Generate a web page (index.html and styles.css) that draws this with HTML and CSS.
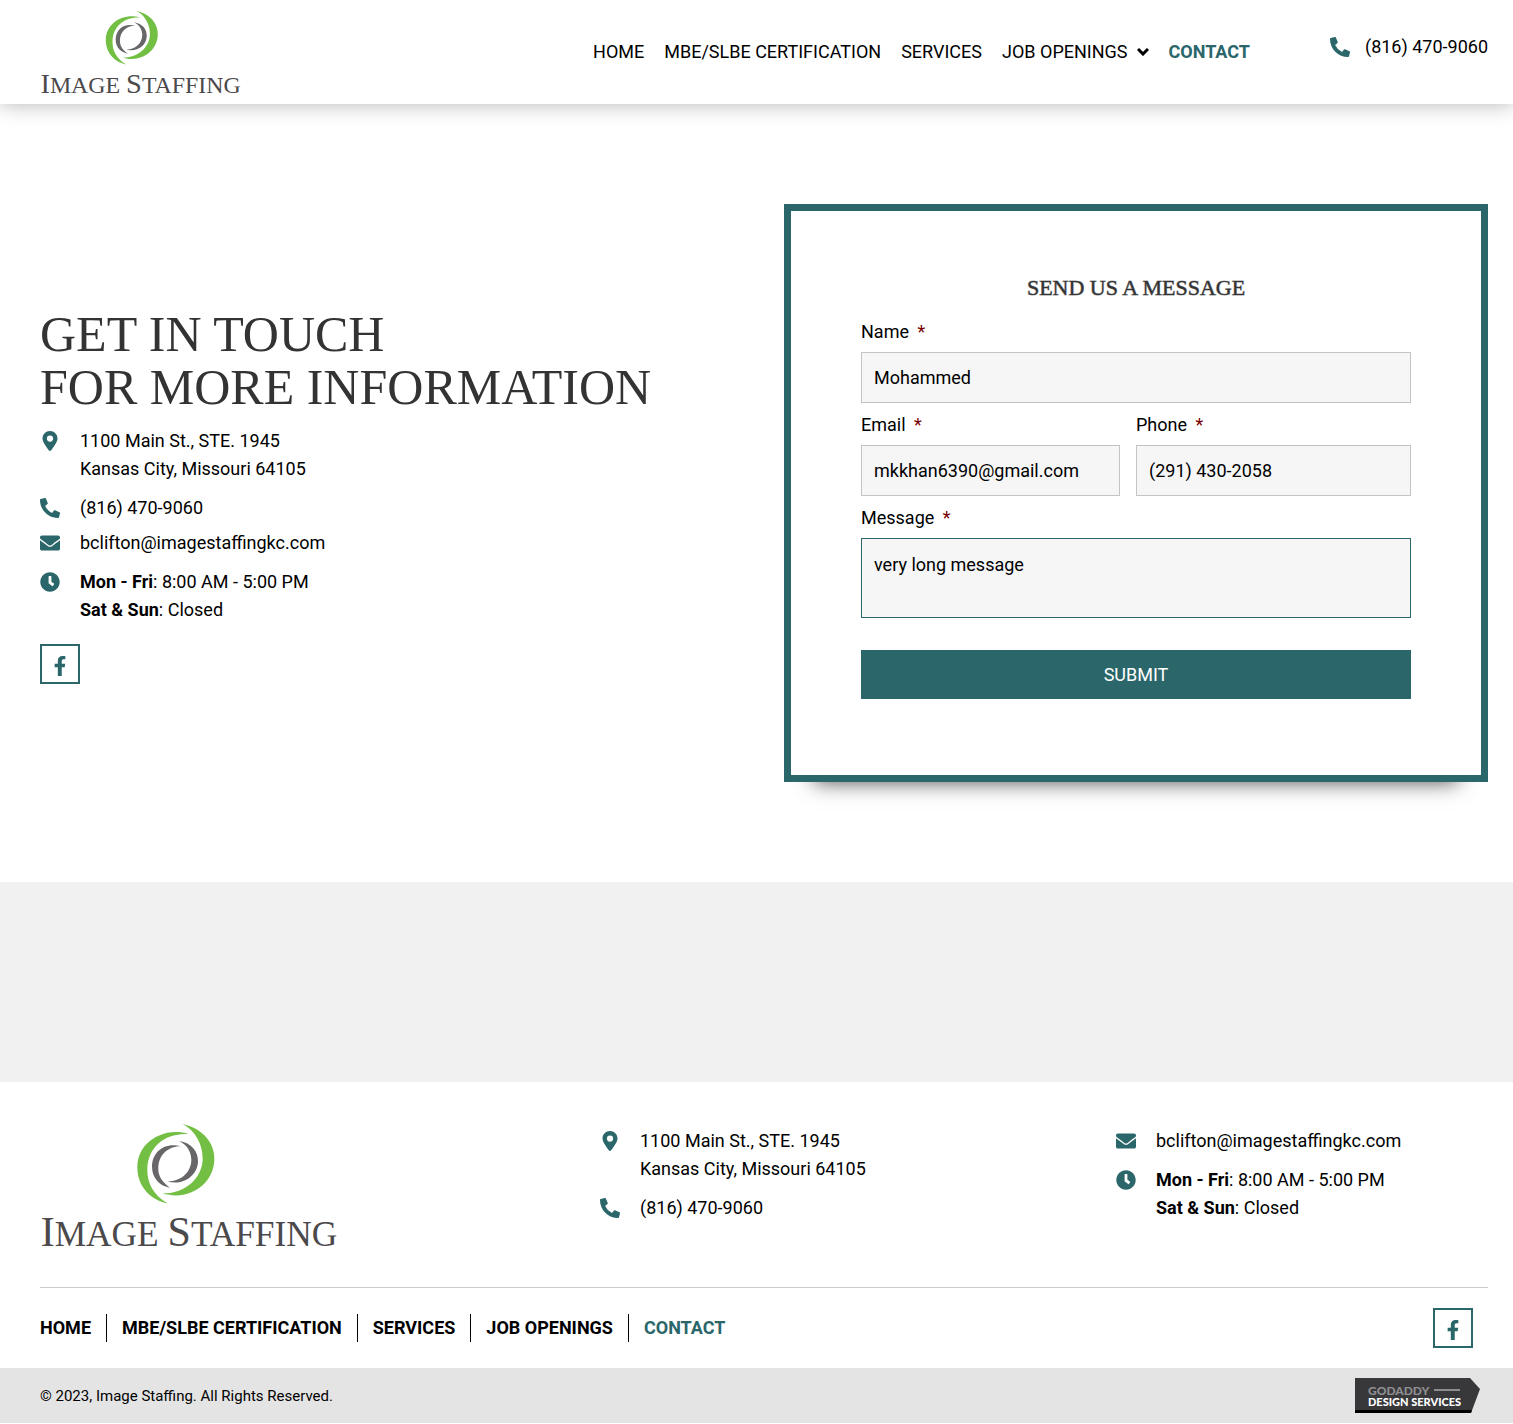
FILE: index.html
```html
<!DOCTYPE html>
<html lang="en">
<head>
<meta charset="utf-8">
<meta name="viewport" content="width=device-width, initial-scale=1">
<title>Contact | Image Staffing</title>
<link rel="stylesheet" href="styles.css">
</head>
<body>
<svg class="sprite" width="0" height="0" aria-hidden="true">
  <symbol id="pin" viewBox="0 0 384 512"><path d="M215.7 499.2C267 435 384 279.4 384 192C384 86 298 0 192 0S0 86 0 192c0 87.4 117 243 168.3 307.2c12.3 15.3 35.1 15.3 47.4 0zM192 112a80 80 0 1 1 0 160 80 80 0 1 1 0-160z"/></symbol>
  <symbol id="phone" viewBox="0 0 512 512"><path d="M497.39 361.8l-112-48a24 24 0 0 0-28 6.9l-49.6 60.6A370.66 370.66 0 0 1 130.6 204.11l60.6-49.6a23.94 23.94 0 0 0 6.9-28l-48-112A24.16 24.16 0 0 0 122.6.61l-104 24A24 24 0 0 0 0 48c0 256.5 207.9 464 464 464a24 24 0 0 0 23.4-18.6l24-104a24.29 24.29 0 0 0-14.01-27.6z"/></symbol>
  <symbol id="mail" viewBox="0 0 512 512"><path d="M502.3 190.8c3.9-3.1 9.7-.2 9.7 4.7V400c0 26.5-21.5 48-48 48H48c-26.5 0-48-21.5-48-48V195.6c0-5 5.7-7.8 9.7-4.7 22.4 17.4 52.1 39.5 154.1 113.6 21.1 15.4 56.7 47.8 92.2 47.6 35.7.3 72-32.8 92.3-47.6 102-74.1 131.6-96.3 154-113.7zM256 320c23.2.4 56.6-29.2 73.4-41.4 132.7-96.3 142.8-104.7 173.4-128.7 5.8-4.5 9.2-11.5 9.2-18.9v-19c0-26.5-21.5-48-48-48H48c-26.5 0-48 21.5-48 48v19c0 7.4 3.4 14.3 9.2 18.9 30.6 23.9 40.7 32.4 173.4 128.7 16.8 12.2 50.2 41.8 73.4 41.4z"/></symbol>
  <symbol id="clock" viewBox="0 0 512 512"><path d="M256,8C119,8,8,119,8,256S119,504,256,504,504,393,504,256,393,8,256,8Zm57.1,350.1L224.9,294c-3.1-2.3-4.9-5.9-4.9-9.7V116c0-6.6,5.4-12,12-12h48c6.6,0,12,5.4,12,12V248l63.5,46.2c5.4,3.9,6.5,11.4,2.6,16.8L334.6,350A12.1,12.1,0,0,1,313.1,358.1Z"/></symbol>
  <symbol id="facebook" viewBox="0 0 320 512"><path d="M279.14 288l14.22-92.66h-88.91v-60.13c0-25.35 12.42-50.06 52.24-50.06h40.42V6.26S260.43 0 225.36 0c-73.22 0-121.08 44.38-121.08 124.72v70.62H22.89V288h81.39v224h100.17V288z"/></symbol>
  <symbol id="swirl" viewBox="310 30 260 260">
    <path fill="#72bf44" d="M475 72C410 50 322 90 322 172C322 232 365 272 413 280C368 255 350 215 352 175C355 110 405 68 475 72Z"/>
    <path fill="#72bf44" d="M457 42C515 55 555 95 553 150C551 220 480 275 397 250C465 252 515 205 518 150C520 105 495 60 457 42Z"/>
    <path fill="#696669" d="M453 109C405 95 366 125 366 170C366 205 390 228 420 233C395 215 383 195 385 170C387 135 415 108 453 109Z"/>
    <path fill="#696669" d="M447 93C485 98 505 125 504 155C502 200 455 228 412 214C450 215 483 190 484 150C484 125 470 103 447 93Z"/>
  </symbol>
</svg>

<header class="header">
  <a href="#" aria-label="Image Staffing">
    <svg class="logo header-logo" viewBox="30 30 888 390">
      <use href="#swirl" x="310" y="30" width="260" height="260"/>
      <text class="logo-text" x="32" y="408"><tspan class="logo-cap">I</tspan>MAGE <tspan class="logo-cap">S</tspan>TAFFING</text>
    </svg>
  </a>
  <nav class="nav" aria-label="Main">
    <a href="#">HOME</a>
    <a href="#">MBE/SLBE CERTIFICATION</a>
    <a href="#">SERVICES</a>
    <a href="#" class="has-menu">JOB OPENINGS <svg class="chevron" viewBox="0 0 12 8"><path d="M1 1L6 6L11 1"/></svg></a>
    <a href="#" class="current">CONTACT</a>
  </nav>
  <a class="header-phone" href="tel:8164709060"><svg class="icon"><use href="#phone"/></svg><span>(816) 470-9060</span></a>
</header>

<main>
  <section class="contact">
    <div class="intro">
      <h1>GET IN TOUCH<br>FOR MORE INFORMATION</h1>
      <ul class="details">
        <li><svg class="icon"><use href="#pin"/></svg><span>1100 Main St., STE. 1945<br>Kansas City, Missouri 64105</span></li>
        <li><svg class="icon"><use href="#phone"/></svg><a href="tel:8164709060">(816) 470-9060</a></li>
        <li class="close"><svg class="icon"><use href="#mail"/></svg><a href="mailto:bclifton@imagestaffingkc.com">bclifton@imagestaffingkc.com</a></li>
        <li><svg class="icon"><use href="#clock"/></svg><span><b>Mon - Fri</b>: 8:00 AM - 5:00 PM<br><b>Sat &amp; Sun</b>: Closed</span></li>
      </ul>
      <a class="social" href="#" aria-label="Facebook"><svg class="icon"><use href="#facebook"/></svg></a>
    </div>
    <form class="card">
      <h2>SEND US A MESSAGE</h2>
      <div class="field">
        <label for="name">Name <span class="required">*</span></label>
        <input id="name" type="text" value="Mohammed">
      </div>
      <div class="pair">
        <div class="field">
          <label for="email">Email <span class="required">*</span></label>
          <input id="email" type="email" value="mkkhan6390@gmail.com">
        </div>
        <div class="field">
          <label for="phone-number">Phone <span class="required">*</span></label>
          <input id="phone-number" type="tel" value="(291) 430-2058">
        </div>
      </div>
      <div class="field">
        <label for="message">Message <span class="required">*</span></label>
        <textarea id="message">very long message</textarea>
      </div>
      <button type="submit">SUBMIT</button>
    </form>
  </section>
  <div class="map"></div>
</main>

<footer>
  <div class="footer-main">
    <div class="footer-top">
      <a href="#" aria-label="Image Staffing">
        <svg class="logo footer-logo" viewBox="30 30 888 390">
          <use href="#swirl" x="310" y="30" width="260" height="260"/>
          <text class="logo-text" x="32" y="408"><tspan class="logo-cap">I</tspan>MAGE <tspan class="logo-cap">S</tspan>TAFFING</text>
        </svg>
      </a>
      <ul class="details">
        <li><svg class="icon"><use href="#pin"/></svg><span>1100 Main St., STE. 1945<br>Kansas City, Missouri 64105</span></li>
        <li><svg class="icon"><use href="#phone"/></svg><a href="tel:8164709060">(816) 470-9060</a></li>
      </ul>
      <ul class="details">
        <li><svg class="icon"><use href="#mail"/></svg><a href="mailto:bclifton@imagestaffingkc.com">bclifton@imagestaffingkc.com</a></li>
        <li><svg class="icon"><use href="#clock"/></svg><span><b>Mon - Fri</b>: 8:00 AM - 5:00 PM<br><b>Sat &amp; Sun</b>: Closed</span></li>
      </ul>
    </div>
    <div class="footer-links">
      <nav class="footer-nav" aria-label="Footer">
        <a href="#">HOME</a>
        <a href="#">MBE/SLBE CERTIFICATION</a>
        <a href="#">SERVICES</a>
        <a href="#">JOB OPENINGS</a>
        <a href="#" class="current">CONTACT</a>
      </nav>
      <a class="social" href="#" aria-label="Facebook"><svg class="icon"><use href="#facebook"/></svg></a>
    </div>
  </div>
  <div class="legal">
    <span>© 2023, Image Staffing. All Rights Reserved.</span>
    <a href="#" aria-label="GoDaddy Design Services">
      <svg class="badge" viewBox="0 0 125 35">
        <path fill="#38383a" d="M0 0H115L125 11L116 35H0Z"/>
        <path fill="#000" d="M0 32H117L116 35H0Z"/>
        <path fill="#8e8e90" d="M79 11H105V13H79Z"/>
        <text class="badge-brand" x="13" y="17">GODADDY</text>
        <text class="badge-name" x="13" y="28">DESIGN SERVICES</text>
      </svg>
    </a>
  </div>
</footer>
</body>
</html>
```
FILE: styles.css
```css
:root {
  --teal: #2a666a;
  --serif: "Liberation Serif", serif;
  --sans: Roboto, sans-serif;
}

* { box-sizing: border-box; }

body {
  margin: 0;
  background: #fff;
  color: #000;
  font: 18px/28px var(--sans);
}

a { color: inherit; text-decoration: none; }
h1, h2, ul { margin: 0; padding: 0; font-weight: normal; }
svg { display: block; }
.sprite { position: absolute; }

.icon {
  width: 20px;
  height: 20px;
  flex: none;
  fill: var(--teal);
}

.current { color: var(--teal); font-weight: 700; }

.logo { overflow: visible; }
.logo-text { font: 106px var(--serif); fill: #4b494b; }
.logo-cap { font-size: 126px; }

/* Header */
.header {
  display: flex;
  align-items: center;
  padding: 8px 25px 8px 40px;
  background: #fff;
  box-shadow: 0 0 20px rgba(0, 0, 0, 0.3);
}

.header-logo { width: 200px; height: 88px; }

.nav {
  display: flex;
  gap: 20px;
  margin-left: auto;
}

.has-menu { display: flex; align-items: center; gap: 9px; }

.chevron {
  width: 12px;
  height: 8px;
  fill: none;
  stroke: #000;
  stroke-width: 3;
}

.header-phone {
  display: flex;
  align-items: center;
  gap: 15px;
  margin-left: 80px;
  padding-bottom: 10px;
}

/* Contact section */
.contact {
  display: grid;
  grid-template-columns: 1fr 1fr;
  gap: 40px;
  align-items: center;
  padding: 100px 25px 100px 40px;
}

.intro { padding-top: 6px; }

h1 {
  margin-bottom: 13px;
  color: #333;
  font: 50px/53px var(--serif);
}

.details {
  display: flex;
  flex-direction: column;
  gap: 11px;
  list-style: none;
}

.details li { display: flex; gap: 20px; }
.details .icon { margin-top: 4px; }
.details .close { margin-top: -4px; }

.social {
  display: flex;
  align-items: center;
  justify-content: center;
  width: 40px;
  height: 40px;
  padding-top: 3px;
  border: 2px solid var(--teal);
}

.intro .social { margin-top: 20px; }

.card {
  padding: 63px 70px 76px;
  border: 7px solid var(--teal);
  background: #fff;
  box-shadow: 0 30px 20px -30px rgba(0, 0, 0, 0.7);
}

h2 {
  margin-bottom: 16px;
  color: #333;
  font: 22px/28px var(--serif);
  text-align: center;
  -webkit-text-stroke: 1px rgba(51, 51, 51, 0.5);
}

.field {
  display: flex;
  flex-direction: column;
  gap: 6px;
  margin-bottom: 8px;
}

.pair {
  display: grid;
  grid-template-columns: calc(50% - 16px) 50%;
  gap: 16px;
}

.required { margin-left: 4px; color: #790000; }

input, textarea {
  width: 100%;
  height: 51px;
  padding: 11px 12px;
  border: 1px solid #c4c4c4;
  border-radius: 0;
  background: #f6f6f6;
  color: #000;
  font: inherit;
}

textarea {
  height: 80px;
  padding: 12px;
  border-color: var(--teal);
  resize: none;
}

button {
  width: 100%;
  height: 49px;
  margin-top: 24px;
  border: 0;
  background: var(--teal);
  color: #fff;
  font: inherit;
}

.map { height: 200px; background: #f1f1f1; }

/* Footer */
.footer-main { padding: 38px 25px 20px 40px; }

.footer-top {
  display: grid;
  grid-template-columns: 560fr 516fr 372fr;
  padding-bottom: 37px;
  border-bottom: 1px solid #ccc;
}

.footer-top .details { padding-top: 7px; }
.footer-logo { width: 296px; height: 130px; }

.footer-links {
  display: flex;
  align-items: center;
  justify-content: space-between;
  padding: 20px 15px 0 0;
}

.footer-nav { display: flex; font-weight: 700; }
.footer-nav a { padding: 0 15px; border-right: 1px solid #000; }
.footer-nav a:first-child { padding-left: 0; }
.footer-nav a:last-child { border-right: 0; }

.legal {
  display: flex;
  align-items: center;
  justify-content: space-between;
  padding: 10px 33px 10px 40px;
  background: #e4e4e4;
  font-size: 15px;
}

.badge { width: 125px; height: 35px; }
.badge text { font: 900 12px Lato, sans-serif; }
.badge-brand { fill: #8e8e90; }
.badge .badge-name { fill: #fff; font-size: 11px; }
```
